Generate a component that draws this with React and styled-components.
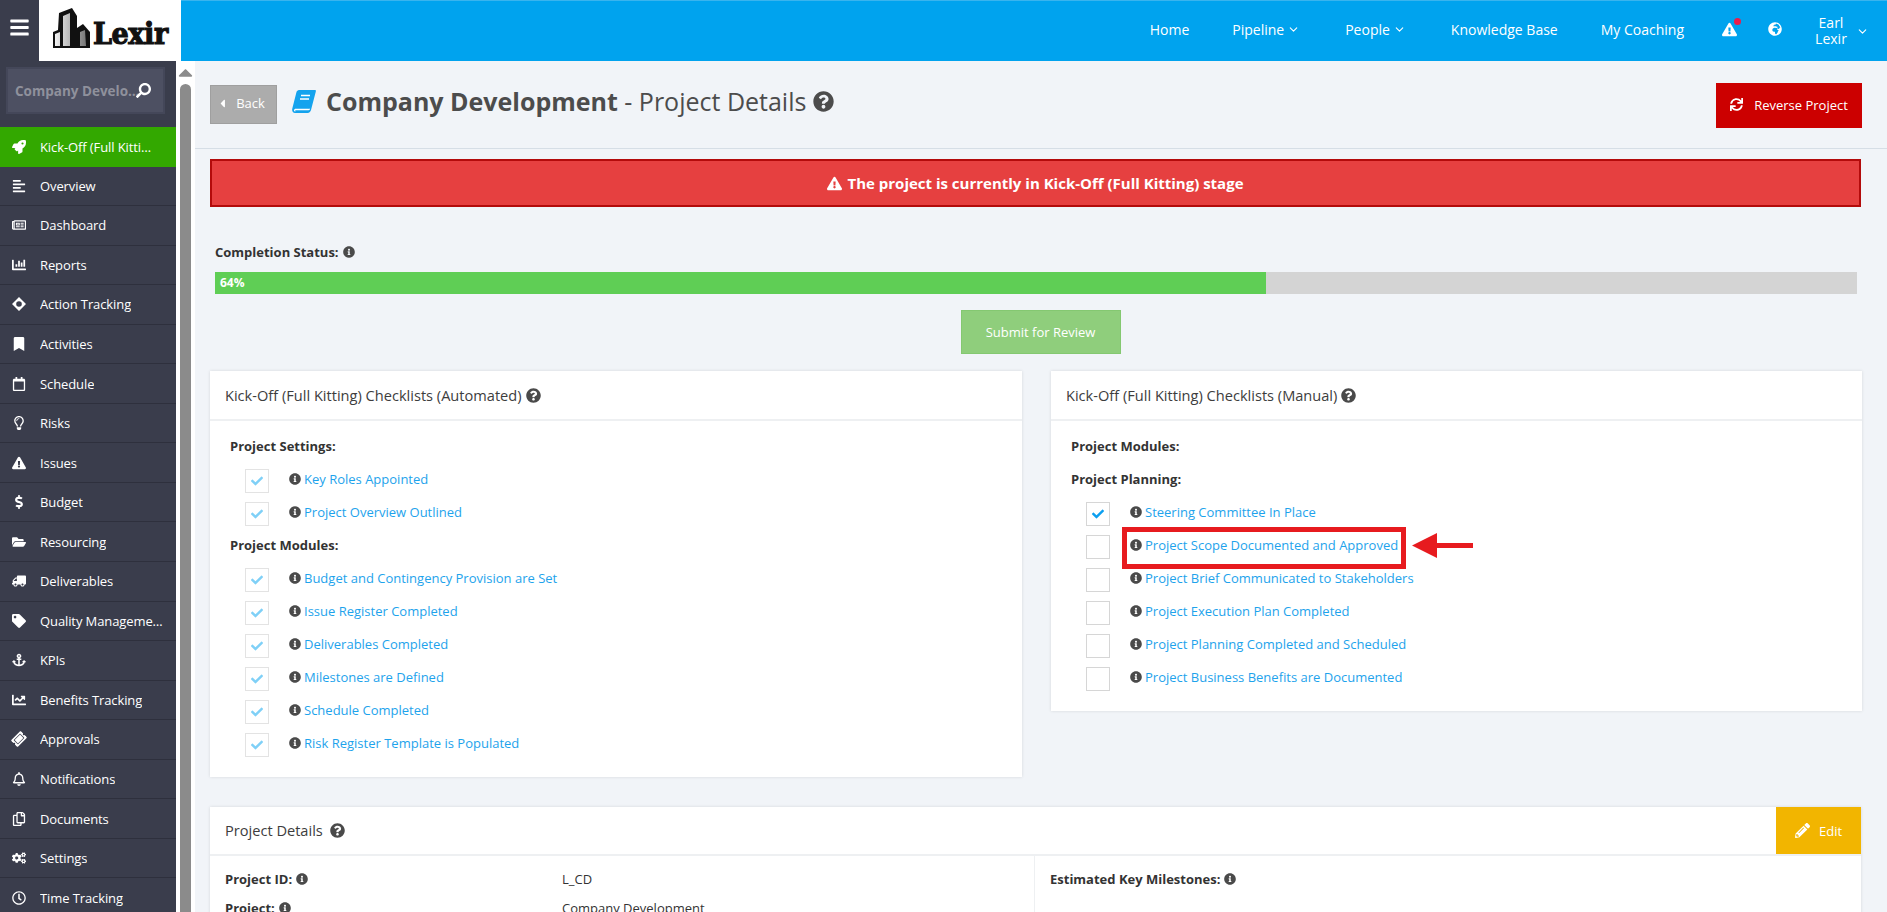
import React from 'react';
import styled, { createGlobalStyle } from 'styled-components';
import { ChevronDown } from 'lucide-react';
import {
  FaBars, FaSearch, FaRocket, FaAlignLeft, FaRegNewspaper, FaChartBar, FaBookmark,
  FaRegCalendar, FaRegLightbulb, FaExclamationTriangle, FaDollarSign, FaFolderOpen, FaTruck, FaTag,
  FaAnchor, FaChartLine, FaTicketAlt, FaRegBell, FaRegCopy, FaCogs, FaRegClock, FaCaretLeft, FaCaretUp,
  FaGlobeAfrica, FaSync, FaQuestionCircle, FaInfoCircle, FaCheck, FaPencilAlt,
} from 'react-icons/fa';

const GlobalStyle = createGlobalStyle`
  html, body { margin: 0; padding: 0; height: 100%; overflow: hidden; }
  body { font-family: "Open Sans", "Liberation Sans", sans-serif; background: #f1f4f8; color: #4a4a4a; }
  * { box-sizing: border-box; }
`;

const Shell = styled.div`
  width: 1887px;
  height: 912px;
  display: flex;
  flex-direction: column;
  overflow: hidden;
`;

/* top bar */
const TopBar = styled.header`
  height: 61px;
  flex: none;
  display: flex;
  background: #00a3ee;
  border-top: 1px solid #39b4ee;
`;
const Burger = styled.div`
  width: 39px;
  margin-top: -1px;
  background: #3a3d4c;
  display: flex;
  align-items: center;
  justify-content: center;
  color: #fff;
  font-size: 21px;
  padding-bottom: 6px;
`;
const LogoBox = styled.div`
  width: 142px;
  margin-top: -1px;
  background: #fff;
  display: flex;
  align-items: flex-start;
  padding: 8px 0 0 14px;
`;
const LogoText = styled.span`
  font-family: "DejaVu Serif Condensed", "DejaVu Serif", "Liberation Serif", serif;
  font-weight: 700;
  font-size: 30px;
  line-height: 36px;
  letter-spacing: -0.4px;
  color: #111;
  margin-left: 2px;
  margin-top: 8px;
  -webkit-text-stroke: 1.1px #111;
`;
const Nav = styled.nav`
  flex: 1;
  display: flex;
  align-items: center;
  justify-content: flex-end;
  color: #fff;
  font-size: 14px;
  padding: 0 17px 4px 0;
`;
const NavItem = styled.span`
  display: flex;
  align-items: center;
  gap: 3px;
  margin-left: ${p => p.$gap}px;
  white-space: nowrap;
`;
const AlertWrap = styled.span`
  position: relative;
  display: flex;
  font-size: 15px;
  margin-left: 38px;
`;
const Dot = styled.span`
  position: absolute;
  top: -4px;
  right: -4px;
  width: 7px;
  height: 7px;
  border-radius: 50%;
  background: #ea1c4c;
`;
const GlobeWrap = styled.span`
  display: flex;
  font-size: 14px;
  margin-left: 31px;
`;
const UserName = styled.span`
  width: 52px;
  margin-left: 23px;
  text-align: center;
  line-height: 16px;
  padding-top: 4px;
`;
const UserCaret = styled.span`
  display: flex;
  justify-content: center;
  width: 16px;
  margin-left: -3px;
  padding-top: 4px;
`;

/* body */
const Body = styled.div`
  flex: 1;
  display: flex;
  min-height: 0;
`;
const Sidebar = styled.aside`
  width: 176px;
  flex: none;
  background: #3a3d4c;
  overflow: hidden;
`;
const SearchWrap = styled.div`
  height: 66px;
  padding: 6px 11px 0 6px;
`;
const SearchBox = styled.div`
  height: 47px;
  background: #4d5062;
  border: 2px solid #444759;
  display: flex;
  align-items: center;
  padding: 0 8px 0 7px;
  color: #8f919c;
  font-size: 13.5px;
  font-weight: 700;
`;
const SearchText = styled.span`
  width: 125px;
  flex: none;
  overflow: hidden;
  white-space: nowrap;
  text-overflow: ellipsis;
`;
const SearchIcon = styled(FaSearch)`
  color: #fff;
  font-size: 15px;
  flex: none;
  margin-left: -4px;
  transform: scaleX(-1);
`;
const MenuItem = styled.div`
  height: 39.55px;
  display: flex;
  align-items: center;
  padding: 0 ${p => (p.$active ? 18 : 13)}px 0 10px;
  font-size: 13px;
  letter-spacing: -0.1px;
  color: #fff;
  background: ${p => (p.$active ? '#33a800' : 'transparent')};
  border-bottom: ${p => (p.$active ? 'none' : '1px solid #2e303d')};
`;
const MenuIcon = styled.span`
  width: 17px;
  margin-right: 13px;
  flex: none;
  display: flex;
  justify-content: center;
  font-size: 14px;
`;
const MenuLabel = styled.span`
  overflow: hidden;
  white-space: nowrap;
  text-overflow: ellipsis;
`;
const FlippedTruck = styled(FaTruck)`
  transform: scaleX(-1);
`;
const TiltedTicket = styled(FaTicketAlt)`
  transform: rotate(-45deg);
`;
const ScrollStrip = styled.div`
  width: 19px;
  flex: none;
  background: #fff;
  padding: 0 4px;
  display: flex;
  flex-direction: column;
  align-items: center;
`;
const ScrollArrow = styled(FaCaretUp)`
  color: #8b8b8b;
  font-size: 17px;
  height: 23px;
  flex: none;
`;
const ScrollThumb = styled.div`
  width: 11px;
  flex: 1;
  background: #8b8b8b;
  border-radius: 6px 6px 0 0;
`;

/* main column */
const Main = styled.main`
  flex: 1;
  min-width: 0;
  padding: 0 26px 0 15px;
  overflow: hidden;
`;
const PageHead = styled.div`
  height: 88px;
  margin: 0 -26px 0 -15px;
  padding: 24px 25px 0 15px;
  display: flex;
  align-items: flex-start;
  border-bottom: 1px solid #d6dee6;
`;
const BackButton = styled.div`
  width: 67px;
  height: 39px;
  background: #acacac;
  border: 1px solid #9f9f9f;
  color: #fff;
  display: flex;
  align-items: center;
  justify-content: center;
  gap: 7px;
  padding: 0 6px 3px 0;
  font-size: 13px;
`;
const TitleIcon = styled.svg`
  width: 24px;
  height: 23px;
  margin: 5px 10px 0 15px;
  flex: none;
`;
const Title = styled.h1`
  flex: 1;
  margin: -2px 0 0;
  font-size: 25px;
  line-height: 36px;
  font-weight: 400;
  color: #4c4c4c;
  display: flex;
  align-items: center;
  gap: 7px;
  white-space: pre;
  b { font-weight: 700; }
`;
const TitleText = styled.span``;
const RedButton = styled.div`
  width: 146px;
  height: 45px;
  margin-top: -2px;
  padding-bottom: 2px;
  background: #cc0000;
  color: #fff;
  display: flex;
  align-items: center;
  justify-content: center;
  gap: 11px;
  font-size: 13px;
`;
const Banner = styled.div`
  height: 48px;
  margin-top: 10px;
  background: #e64040;
  border: 2px solid #b30b0b;
  color: #fff;
  font-weight: 700;
  font-size: 15px;
  display: flex;
  align-items: center;
  justify-content: center;
  gap: 5px;
`;
const ProgressBlock = styled.div`
  padding: 36px 4px 0 5px;
`;
const ProgressLabel = styled.div`
  display: flex;
  align-items: center;
  gap: 4px;
  height: 18px;
  font-size: 13px;
  font-weight: 700;
  color: #333;
`;
const ProgressTrack = styled.div`
  height: 22px;
  margin-top: 11px;
  background: #d4d4d4;
`;
const ProgressFill = styled.div`
  height: 100%;
  background: #5fce55;
  color: #fff;
  font-size: 12px;
  font-weight: 700;
  line-height: 22px;
  padding-left: 5px;
`;
const SubmitRow = styled.div`
  display: flex;
  justify-content: center;
  margin-top: 16px;
  padding-left: 10px;
`;
const SubmitButton = styled.div`
  width: 160px;
  height: 44px;
  background: #8fce7c;
  border: 1px solid #84c871;
  color: #fff;
  font-size: 13px;
  display: flex;
  align-items: center;
  justify-content: center;
`;
const PanelGrid = styled.div`
  display: grid;
  grid-template-columns: 812px 811px;
  justify-content: space-between;
  align-items: start;
  margin: 17px -1px 0 0;
`;
const Panel = styled.section`
  background: #fff;
  box-shadow: 0 0 3px rgba(0, 0, 0, 0.12);
`;
const PanelHead = styled.div`
  height: 50px;
  padding-left: 15px;
  display: flex;
  align-items: center;
  gap: 4px;
  font-size: 14.6px;
  color: #3d3d3d;
  border-bottom: 2px solid #eef0f2;
`;
const PanelBody = styled.div`
  padding: 8px 20px ${p => p.$bottom}px;
`;
const GroupTitle = styled.div`
  height: 33px;
  display: flex;
  align-items: center;
  font-size: 13px;
  font-weight: 700;
  color: #333;
`;
const CheckRow = styled.div`
  position: relative;
  height: 33px;
  display: flex;
  align-items: center;
  padding-left: 15px;
`;
const CheckBox = styled.span`
  width: 24px;
  height: 24px;
  margin-top: 5px;
  border: 1px solid ${p => (p.$muted ? '#e3e3e3' : '#d6d6d6')};
  display: flex;
  align-items: center;
  justify-content: center;
  font-size: 12px;
  color: ${p => (p.$muted ? '#7fd0f7' : '#0c9ff0')};
  flex: none;
`;
const CheckLabel = styled.span`
  margin-left: 20px;
  display: flex;
  align-items: center;
  gap: 3px;
  font-size: 13px;
  color: #1ea3ec;
  white-space: nowrap;
`;
const InfoIcon = styled(FaInfoCircle)`
  color: #4a4a4a;
  font-size: 12px;
  flex: none;
`;
const HelpIcon = styled(FaQuestionCircle)`
  color: #4a4a4a;
  font-size: 15px;
  flex: none;
`;
const TitleHelp = styled(FaQuestionCircle)`
  color: #4c4c4c;
  font-size: 21px;
  flex: none;
`;
const Highlight = styled.span`
  position: absolute;
  left: 51px;
  top: -1px;
  width: 284px;
  height: 42px;
  border: 5px solid #e71b1f;
`;
const Arrow = styled.svg`
  position: absolute;
  left: 341px;
  top: 5px;
  width: 61px;
  height: 26px;
`;
const DetailsPanel = styled(Panel)`
  margin-top: 30px;
`;
const DetailsHead = styled(PanelHead)`
  justify-content: flex-start;
  gap: 7px;
  height: 49px;
  padding-bottom: 1px;
`;
const EditButton = styled.div`
  width: 85px;
  height: 47px;
  margin: 0 0 -1px auto;
  background: #f2b500;
  color: #fff;
  display: flex;
  align-items: center;
  justify-content: center;
  gap: 9px;
  font-size: 13px;
`;
const EditIcon = styled(FaPencilAlt)`
  font-size: 15px;
`;
const DetailsGrid = styled.div`
  display: grid;
  grid-template-columns: 825px 1fr;
  height: 200px;
`;
const DetailsCol = styled.div`
  padding: 8px 15px;
  border-right: ${p => (p.$divided ? '1px solid #eef0f2' : 'none')};
`;
const DetailRow = styled.div`
  height: 29px;
  display: flex;
  align-items: center;
  font-size: 13px;
  color: #333;
`;
const DetailKey = styled.span`
  width: 337px;
  display: flex;
  align-items: center;
  gap: 4px;
  font-weight: 700;
`;

const LogoMark = () => (
  <svg width="38" height="41" viewBox="0 0 38 41">
    <defs>
      <linearGradient id="tower" x1="0" x2="1">
        <stop offset="0" stopColor="#f2f2f2" />
        <stop offset="1" stopColor="#777" />
      </linearGradient>
    </defs>
    <path d="M0 40 L0 24 L5 22 L6 5 L19 0 L24 8 L24 20 L30 16 L37 24 L37 40 Z" fill="#111" />
    <path d="M2 38 L2 26 L7 24 L7 38 Z M10 38 L10 8 L17 5 L17 38 Z M27 38 L27 24 L32 22 L33 38 Z" fill="url(#tower)" />
  </svg>
);

const ActionIcon = () => (
  <svg width="14" height="14" viewBox="0 0 14 14">
    <path fillRule="evenodd" d="M7 0 L14 7 L7 14 L0 7 Z M7 4.2 A2.8 2.8 0 1 0 7 9.8 A2.8 2.8 0 1 0 7 4.2 Z" fill="#fff" />
  </svg>
);

const BookIcon = () => (
  <TitleIcon viewBox="0 0 24 23">
    <path
      d="M7 0 H23 C24 0 24 1 23.7 2 L19 20 C18.6 21.5 17.5 23 15.5 23 H3 C0.8 23 -0.3 21 0.3 18.5 L4.5 2 C4.8 1 5.8 0 7 0 Z"
      fill="#14a3ee"
    />
    <path d="M3 19.5 H16.5 L17.8 19 M3 19.5 C2.4 20 2.5 21 3.3 21" stroke="#fff" strokeWidth="1.3" fill="none" />
    <path d="M9 5.5 H18 M8 9 H17" stroke="#fff" strokeWidth="1.7" />
  </TitleIcon>
);

const menu = [
  [FaAlignLeft, 'Overview'],
  [FaRegNewspaper, 'Dashboard'],
  [FaChartBar, 'Reports'],
  [ActionIcon, 'Action Tracking'],
  [FaBookmark, 'Activities'],
  [FaRegCalendar, 'Schedule'],
  [FaRegLightbulb, 'Risks'],
  [FaExclamationTriangle, 'Issues'],
  [FaDollarSign, 'Budget'],
  [FaFolderOpen, 'Resourcing'],
  [FlippedTruck, 'Deliverables'],
  [FaTag, 'Quality Management'],
  [FaAnchor, 'KPIs'],
  [FaChartLine, 'Benefits Tracking'],
  [TiltedTicket, 'Approvals'],
  [FaRegBell, 'Notifications'],
  [FaRegCopy, 'Documents'],
  [FaCogs, 'Settings'],
  [FaRegClock, 'Time Tracking'],
];

const Caret = () => <ChevronDown size={13} strokeWidth={2} />;

const Check = ({ label, done, muted, marked }) => (
  <CheckRow>
    <CheckBox $muted={muted}>{done && <FaCheck />}</CheckBox>
    <CheckLabel>
      <InfoIcon />
      {label}
    </CheckLabel>
    {marked && (
      <>
        <Highlight />
        <Arrow viewBox="0 0 61 26">
          <path d="M0 12.5 L25 0 L25 10 L61 10 L61 15 L25 15 L25 25 Z" fill="#e71b1f" />
        </Arrow>
      </>
    )}
  </CheckRow>
);

export default function App() {
  return (
    <Shell>
      <GlobalStyle />
      <TopBar>
        <Burger><FaBars /></Burger>
        <LogoBox>
          <LogoMark />
          <LogoText>Lexir</LogoText>
        </LogoBox>
        <Nav>
          <NavItem $gap={0}>Home</NavItem>
          <NavItem $gap={43}>Pipeline <Caret /></NavItem>
          <NavItem $gap={45}>People <Caret /></NavItem>
          <NavItem $gap={45}>Knowledge Base</NavItem>
          <NavItem $gap={43}>My Coaching</NavItem>
          <AlertWrap><FaExclamationTriangle /><Dot /></AlertWrap>
          <GlobeWrap><FaGlobeAfrica /></GlobeWrap>
          <UserName>Earl Lexir</UserName>
          <UserCaret><Caret /></UserCaret>
        </Nav>
      </TopBar>
      <Body>
        <Sidebar>
          <SearchWrap>
            <SearchBox>
              <SearchText>Company Development</SearchText>
              <SearchIcon />
            </SearchBox>
          </SearchWrap>
          <MenuItem $active>
            <MenuIcon><FaRocket /></MenuIcon>
            <MenuLabel>Kick-Off (Full Kitting)</MenuLabel>
          </MenuItem>
          {menu.map(([Icon, label]) => (
            <MenuItem key={label}>
              <MenuIcon><Icon /></MenuIcon>
              <MenuLabel>{label}</MenuLabel>
            </MenuItem>
          ))}
        </Sidebar>
        <ScrollStrip>
          <ScrollArrow />
          <ScrollThumb />
        </ScrollStrip>
        <Main>
          <PageHead>
            <BackButton><FaCaretLeft /> Back</BackButton>
            <BookIcon />
            <Title>
              <TitleText><b>Company Development</b> - Project Details</TitleText>
              <TitleHelp />
            </Title>
            <RedButton><FaSync /> Reverse Project</RedButton>
          </PageHead>
          <Banner>
            <FaExclamationTriangle />
            The project is currently in Kick-Off (Full Kitting) stage
          </Banner>
          <ProgressBlock>
            <ProgressLabel>Completion Status: <InfoIcon /></ProgressLabel>
            <ProgressTrack>
              <ProgressFill style={{ width: '64%' }}>64%</ProgressFill>
            </ProgressTrack>
          </ProgressBlock>
          <SubmitRow>
            <SubmitButton>Submit for Review</SubmitButton>
          </SubmitRow>
          <PanelGrid>
            <Panel>
              <PanelHead>Kick-Off (Full Kitting) Checklists (Automated) <HelpIcon /></PanelHead>
              <PanelBody $bottom={18}>
                <GroupTitle>Project Settings:</GroupTitle>
                <Check done muted label="Key Roles Appointed" />
                <Check done muted label="Project Overview Outlined" />
                <GroupTitle>Project Modules:</GroupTitle>
                <Check done muted label="Budget and Contingency Provision are Set" />
                <Check done muted label="Issue Register Completed" />
                <Check done muted label="Deliverables Completed" />
                <Check done muted label="Milestones are Defined" />
                <Check done muted label="Schedule Completed" />
                <Check done muted label="Risk Register Template is Populated" />
              </PanelBody>
            </Panel>
            <Panel>
              <PanelHead>Kick-Off (Full Kitting) Checklists (Manual) <HelpIcon /></PanelHead>
              <PanelBody $bottom={18}>
                <GroupTitle>Project Modules:</GroupTitle>
                <GroupTitle>Project Planning:</GroupTitle>
                <Check done label="Steering Committee In Place" />
                <Check marked label="Project Scope Documented and Approved" />
                <Check label="Project Brief Communicated to Stakeholders" />
                <Check label="Project Execution Plan Completed" />
                <Check label="Project Planning Completed and Scheduled" />
                <Check label="Project Business Benefits are Documented" />
              </PanelBody>
            </Panel>
          </PanelGrid>
          <DetailsPanel>
            <DetailsHead>
              Project Details <HelpIcon />
              <EditButton><EditIcon /> Edit</EditButton>
            </DetailsHead>
            <DetailsGrid>
              <DetailsCol $divided>
                <DetailRow><DetailKey>Project ID: <InfoIcon /></DetailKey>L_CD</DetailRow>
                <DetailRow><DetailKey>Project: <InfoIcon /></DetailKey>Company Development</DetailRow>
              </DetailsCol>
              <DetailsCol>
                <DetailRow><DetailKey>Estimated Key Milestones: <InfoIcon /></DetailKey></DetailRow>
              </DetailsCol>
            </DetailsGrid>
          </DetailsPanel>
        </Main>
      </Body>
    </Shell>
  );
}
